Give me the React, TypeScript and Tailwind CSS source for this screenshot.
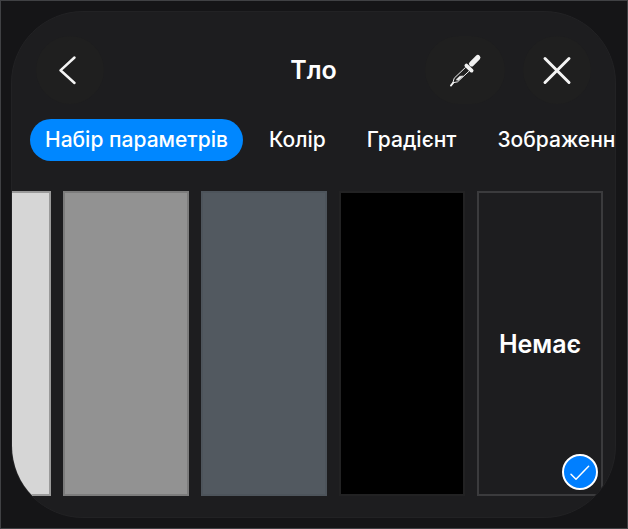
import React, { useState } from 'react';
import clsx from 'clsx';

interface Preset {
  id: string;
  label: string;
  className: string;
}

const tabs = ['Набір параметрів', 'Колір', 'Градієнт', 'Зображення'];

const presets: Preset[] = [
  { id: 'light', label: 'Світло-сірий', className: 'bg-[#d6d6d6] border-[#9a9a9a]' },
  { id: 'gray', label: 'Сірий', className: 'bg-[#929292] border-[#7c7c7c]' },
  { id: 'slate', label: 'Сіро-синій', className: 'bg-[#525960] border-[#4d545b]' },
  { id: 'black', label: 'Чорний', className: 'bg-black border-[#222223]' },
  { id: 'none', label: 'Немає', className: 'bg-transparent border-[#3b3b3d]' },
];

const BackIcon = () => (
  <svg width="68" height="68" viewBox="0 0 68 68" fill="none" stroke="#f4f4f4" strokeWidth="2.5" strokeLinecap="round" strokeLinejoin="round">
    <path d="M38.5 21.5 24.5 34.3l14 12.7" />
  </svg>
);

const CloseIcon = () => (
  <svg width="68" height="68" viewBox="0 0 68 68" fill="none" stroke="#f4f4f4" strokeWidth="3" strokeLinecap="round">
    <path d="M22 22.5l24 24M46 22.5l-24 24" />
  </svg>
);

const DropperIcon = () => (
  <svg width="80" height="68" viewBox="0 0 80 68" fill="none" stroke="#f0f0f0" strokeLinecap="round" strokeLinejoin="round">
    <path d="M46.6 27.8l6.2-6.2" strokeWidth="5.2" />
    <path d="M41.4 29.6l5.2 5" strokeWidth="3.8" />
    <path d="M40.3 31.6 29.2 42.2l-1.4 4.6 4.8-1 11.4-10.6" strokeWidth="1" />
    <path d="M28.3 46.6l-2.4 3" strokeWidth="1.8" />
    <path d="M31.3 43.5l3.4-3.2 3.4-.4-4.8 4.4z" fill="#f0f0f0" strokeWidth=".5" />
  </svg>
);

const CheckBadge = () => (
  <span className="absolute right-[3px] bottom-1 flex h-9 w-9 items-center justify-center rounded-full border-2 border-white bg-[#007fff]">
    <svg width="32" height="32" viewBox="0 0 32 32" fill="none" stroke="white" strokeWidth="1.5" strokeLinecap="round" strokeLinejoin="round">
      <path d="M7 18.2l5 5 12.6-13" />
    </svg>
  </span>
);

const App: React.FC = () => {
  const [activeTab, setActiveTab] = useState(tabs[0]);
  const [selected, setSelected] = useState('none');

  return (
    <div className="flex min-h-screen border border-[#404144] bg-[#151517] pt-[10px] pr-[11px] pb-[10px] pl-[10px] font-['Inter','Liberation_Sans',sans-serif] text-white">
      <section className="flex min-w-0 flex-1 flex-col overflow-hidden rounded-[72px] border border-[#222224] bg-[#1d1d1f] pb-[21px]">

        {/* Header */}
        <header className="grid grid-cols-[1fr_auto_1fr] items-center px-6 pt-6">
          <button type="button" aria-label="Назад" className="h-[68px] w-[68px] rounded-full bg-[#1f1f1f]">
            <BackIcon />
          </button>
          <h1 className="text-[25px] leading-8 font-semibold">Тло</h1>
          <div className="flex justify-end gap-[18px]">
            <button type="button" aria-label="Піпетка" className="h-[68px] w-20 rounded-full bg-[#1f1f1f]">
              <DropperIcon />
            </button>
            <button type="button" aria-label="Закрити" className="h-[68px] w-[68px] rounded-full bg-[#1f1f1f]">
              <CloseIcon />
            </button>
          </div>
        </header>

        {/* Tabs */}
        <nav className="mt-[15px] flex gap-[11px] overflow-hidden pl-[18px]">
          {tabs.map((tab) => (
            <button
              key={tab}
              type="button"
              onClick={() => setActiveTab(tab)}
              className={clsx(
                'h-[42px] shrink-0 rounded-full px-[15px] text-[21px] leading-7 font-medium whitespace-nowrap',
                tab === activeTab && 'bg-[#0087ff]'
              )}
            >
              {tab}
            </button>
          ))}
        </nav>

        {/* Presets */}
        <div className="mt-[30px] flex flex-1 justify-end gap-3 overflow-hidden pr-3">
          {presets.map((preset) => (
            <button
              key={preset.id}
              type="button"
              aria-label={preset.label}
              aria-pressed={preset.id === selected}
              onClick={() => setSelected(preset.id)}
              className={clsx(
                'relative min-h-60 w-[126px] shrink-0 border-2 text-[25px] leading-8 font-semibold',
                preset.className
              )}
            >
              {preset.id === 'none' && preset.label}
              {preset.id === selected && <CheckBadge />}
            </button>
          ))}
        </div>
      </section>
    </div>
  );
};

export default App;
